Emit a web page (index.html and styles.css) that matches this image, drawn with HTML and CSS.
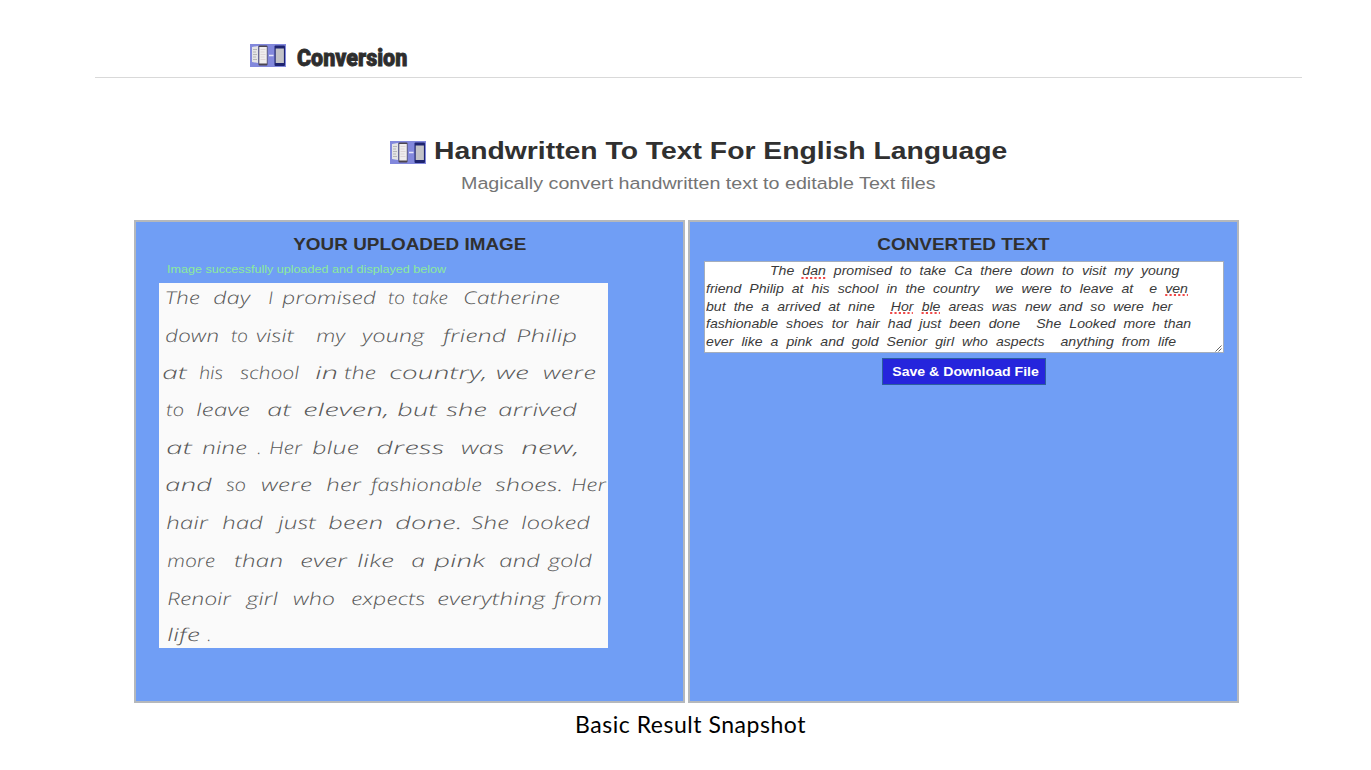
FILE: index.html
```html
<!DOCTYPE html>
<html lang="en">
<head>
<meta charset="utf-8">
<title>Conversion</title>
<link rel="stylesheet" href="styles.css">
</head>
<body>
<svg class="defs" width="0" height="0" aria-hidden="true">
  <symbol id="logo" viewBox="0 0 36 23">
    <rect width="36" height="23" fill="#8288dc"/>
    <path d="M2 3l6-1v17l-6-1z" fill="#e4e4e6"/>
    <path d="M3 5.500h4M3 8h3M3 10.500h4M3 13h3M3 15.500h4" stroke="#aaa" stroke-width=".8"/>
    <rect x="8.500" y="1.500" width="9" height="20" rx="1" fill="#4b4550"/>
    <rect x="9.300" y="3" width="7.500" height="16.500" fill="#f0eeee"/>
    <path d="M10.500 5.500h5M10.500 8h4M10.500 10.500h5M10.500 13h4M10.500 15.500h5" stroke="#d5cccd" stroke-width=".7"/>
    <path d="M19 11.500h4.500" stroke="#e6e6fa" stroke-width="1.500"/>
    <rect x="24.500" y="1.500" width="10.500" height="20.500" rx="1" fill="#1e2470"/>
    <rect x="25.700" y="4.500" width="8.200" height="14.500" fill="#c3c3c7"/>
  </symbol>
</svg>
<header class="topbar">
  <svg class="logo"><use href="#logo"/></svg>
  <span class="brand">Conversion</span>
</header>
<section class="hero">
  <div class="hero-row">
    <svg class="logo hero-logo"><use href="#logo"/></svg>
    <h1 class="title">Handwritten To Text For English Language</h1>
  </div>
  <p class="subtitle">Magically convert handwritten text to editable Text files</p>
</section>
<main class="panels">
  <section class="panel">
    <h2 class="panel-title">YOUR UPLOADED IMAGE</h2>
    <p class="success">Image successfully uploaded and displayed below</p>
    <svg class="paper" viewBox="158.500 283.500 449 364.500">
      <g transform="translate(0 304) skewX(5)"><text x="165" textLength="35" lengthAdjust="spacingAndGlyphs">The</text><text x="213" textLength="37" lengthAdjust="spacingAndGlyphs">day</text><text x="268" textLength="5" lengthAdjust="spacingAndGlyphs">I</text><text x="282" textLength="94" lengthAdjust="spacingAndGlyphs">promised</text><text x="388" textLength="17" lengthAdjust="spacingAndGlyphs">to</text><text x="412" textLength="36" lengthAdjust="spacingAndGlyphs">take</text><text x="463" textLength="97" lengthAdjust="spacingAndGlyphs">Catherine</text></g>
      <g transform="translate(0 342) skewX(5)"><text x="165" textLength="54" lengthAdjust="spacingAndGlyphs">down</text><text x="231" textLength="17" lengthAdjust="spacingAndGlyphs">to</text><text x="256" textLength="38" lengthAdjust="spacingAndGlyphs">visit</text><text x="316" textLength="29" lengthAdjust="spacingAndGlyphs">my</text><text x="362" textLength="62" lengthAdjust="spacingAndGlyphs">young</text><text x="443" textLength="63" lengthAdjust="spacingAndGlyphs">friend</text><text x="516" textLength="61" lengthAdjust="spacingAndGlyphs">Philip</text></g>
      <g transform="translate(0 379.500) skewX(5)"><text x="162" textLength="25" lengthAdjust="spacingAndGlyphs">at</text><text x="199" textLength="24" lengthAdjust="spacingAndGlyphs">his</text><text x="240" textLength="59" lengthAdjust="spacingAndGlyphs">school</text><text x="315" textLength="23" lengthAdjust="spacingAndGlyphs">in</text><text x="344" textLength="32" lengthAdjust="spacingAndGlyphs">the</text><text x="389" textLength="98" lengthAdjust="spacingAndGlyphs">country,</text><text x="496" textLength="33" lengthAdjust="spacingAndGlyphs">we</text><text x="543" textLength="53" lengthAdjust="spacingAndGlyphs">were</text></g>
      <g transform="translate(0 416) skewX(5)"><text x="166" textLength="18" lengthAdjust="spacingAndGlyphs">to</text><text x="196" textLength="54" lengthAdjust="spacingAndGlyphs">leave</text><text x="267" textLength="24" lengthAdjust="spacingAndGlyphs">at</text><text x="303" textLength="86" lengthAdjust="spacingAndGlyphs">eleven,</text><text x="397" textLength="40" lengthAdjust="spacingAndGlyphs">but</text><text x="446" textLength="41" lengthAdjust="spacingAndGlyphs">she</text><text x="498" textLength="79" lengthAdjust="spacingAndGlyphs">arrived</text></g>
      <g transform="translate(0 454) skewX(5)"><text x="166" textLength="26" lengthAdjust="spacingAndGlyphs">at</text><text x="202" textLength="45" lengthAdjust="spacingAndGlyphs">nine</text><text x="257">.</text><text x="269" textLength="33" lengthAdjust="spacingAndGlyphs">Her</text><text x="312" textLength="47" lengthAdjust="spacingAndGlyphs">blue</text><text x="376" textLength="68" lengthAdjust="spacingAndGlyphs">dress</text><text x="461" textLength="43" lengthAdjust="spacingAndGlyphs">was</text><text x="521" textLength="58" lengthAdjust="spacingAndGlyphs">new,</text></g>
      <g transform="translate(0 491.500) skewX(5)"><text x="165" textLength="47" lengthAdjust="spacingAndGlyphs">and</text><text x="226" textLength="20" lengthAdjust="spacingAndGlyphs">so</text><text x="261" textLength="51" lengthAdjust="spacingAndGlyphs">were</text><text x="326" textLength="35" lengthAdjust="spacingAndGlyphs">her</text><text x="371" textLength="111" lengthAdjust="spacingAndGlyphs">fashionable</text><text x="495" textLength="68" lengthAdjust="spacingAndGlyphs">shoes.</text><text x="571" textLength="35" lengthAdjust="spacingAndGlyphs">Her</text></g>
      <g transform="translate(0 529) skewX(5)"><text x="166" textLength="42" lengthAdjust="spacingAndGlyphs">hair</text><text x="222" textLength="41" lengthAdjust="spacingAndGlyphs">had</text><text x="278" textLength="38" lengthAdjust="spacingAndGlyphs">just</text><text x="328" textLength="55" lengthAdjust="spacingAndGlyphs">been</text><text x="395" textLength="67" lengthAdjust="spacingAndGlyphs">done.</text><text x="471" textLength="38" lengthAdjust="spacingAndGlyphs">She</text><text x="521" textLength="69" lengthAdjust="spacingAndGlyphs">looked</text></g>
      <g transform="translate(0 567) skewX(5)"><text x="167" textLength="48" lengthAdjust="spacingAndGlyphs">more</text><text x="234" textLength="49" lengthAdjust="spacingAndGlyphs">than</text><text x="300" textLength="47" lengthAdjust="spacingAndGlyphs">ever</text><text x="357" textLength="37" lengthAdjust="spacingAndGlyphs">like</text><text x="411" textLength="14" lengthAdjust="spacingAndGlyphs">a</text><text x="434" textLength="51" lengthAdjust="spacingAndGlyphs">pink</text><text x="499" textLength="41" lengthAdjust="spacingAndGlyphs">and</text><text x="548" textLength="44" lengthAdjust="spacingAndGlyphs">gold</text></g>
      <g transform="translate(0 605) skewX(5)"><text x="167" textLength="64" lengthAdjust="spacingAndGlyphs">Renoir</text><text x="246" textLength="32" lengthAdjust="spacingAndGlyphs">girl</text><text x="293" textLength="42" lengthAdjust="spacingAndGlyphs">who</text><text x="351" textLength="74" lengthAdjust="spacingAndGlyphs">expects</text><text x="437" textLength="108" lengthAdjust="spacingAndGlyphs">everything</text><text x="554" textLength="48" lengthAdjust="spacingAndGlyphs">from</text></g>
      <g transform="translate(0 641.500) skewX(5)"><text x="167" textLength="33" lengthAdjust="spacingAndGlyphs">life</text><text x="207">.</text></g>
    </svg>
  </section>
  <section class="panel">
    <h2 class="panel-title">CONVERTED TEXT</h2>
    <div class="output">
      <div class="line l1">The <u>dan</u> promised to take Ca there down to visit my young</div>
      <div class="line l2">friend Philip at his school in the country &nbsp;we were to leave at &nbsp;e <u>ven</u></div>
      <div class="line l3">but the a arrived at nine &nbsp;<u>Hor</u> <u>ble</u> areas was new and so were her</div>
      <div class="line l4">fashionable shoes tor hair had just been done &nbsp;She Looked more than</div>
      <div class="line l5">ever like a pink and gold Senior girl who aspects &nbsp;anything from life</div>
      <svg class="grip" viewBox="0 0 7 7"><path d="M.5 6.500l6-6M3.500 6.500l3-3" stroke="#555" stroke-width=".9"/></svg>
    </div>
    <button class="save"><span>Save &amp; Download File</span></button>
  </section>
</main>
<footer class="caption">Basic Result Snapshot</footer>
</body>
</html>
```
FILE: styles.css
```css
* { box-sizing: border-box; }
body {
  margin: 0;
  height: 770px;
  overflow: hidden;
  background: #fff;
  color: #303030;
  font-family: "Liberation Sans", Arial, sans-serif;
}
h1, h2, p { margin: 0; white-space: nowrap; }
.defs { display: block; height: 0; }
.topbar {
  display: flex;
  align-items: flex-start;
  height: 78px;
  margin: 0 69px 0 95px;
  padding: 44px 0 0 155px;
  border-bottom: 1px solid #d9d9d9;
}
.logo { width: 36px; height: 23px; flex: none; }
.brand {
  margin: 1px 0 0 11px;
  font: 900 23px/27px Roboto, sans-serif;
  color: #2d2d2d;
  transform: scaleX(.935);
  transform-origin: 0 0;
  -webkit-text-stroke: .8px #2d2d2d;
}
.hero { height: 142px; padding-top: 59px; }
.hero-row { display: flex; padding-left: 390px; }
.hero-logo { margin-top: 4px; }
.title {
  margin-left: 7.500px;
  font-size: 24px;
  line-height: 28px;
  transform: scaleX(1.18);
  transform-origin: 0 0;
}
.subtitle {
  width: max-content;
  margin: 9px 0 0 461px;
  font-size: 16.700px;
  line-height: 20px;
  color: #747474;
  transform: scaleX(1.18);
  transform-origin: 0 0;
}
.panels {
  display: grid;
  grid-template-columns: 551px 551px;
  gap: 3px;
  height: 483px;
  margin-left: 134px;
}
.panel {
  border: 2px solid #b5b8bc;
  background: #709ef5;
  padding-top: 13px;
}
.panel-title {
  width: max-content;
  margin: 0 auto;
  font-size: 17px;
  line-height: 20px;
  transform: scaleX(1.112);
}
.success {
  width: max-content;
  margin: 7px 0 0 31px;
  font-size: 11.200px;
  line-height: 14px;
  color: #8cea9c;
  transform: scaleX(1.125);
  transform-origin: 0 0;
}
.paper {
  display: block;
  width: 449px;
  height: 364.500px;
  margin: 7px 0 0 22.500px;
  background: #fafafa;
}
.paper text {
  font: italic 300 17.500px "Open Sans", "Noto Sans", sans-serif;
  fill: #585858;
}
.output {
  position: relative;
  width: 520px;
  height: 92px;
  margin: 6px 0 0 14px;
  padding: 0 0 0 1px;
  border: 1px solid #a5aebc;
  background: #fff;
  color: #3a3a3a;
  font-size: 13px;
  font-style: italic;
  line-height: 17.750px;
}
.line {
  height: 17.750px;
  white-space: nowrap;
  text-align-last: justify;
  transform: scaleX(1.083);
  transform-origin: 0 0;
}
.line u { text-decoration: underline dotted #f04848 1.500px; text-underline-offset: 1.500px; text-decoration-skip-ink: none; }
.l1 { margin-left: 63.500px; width: 378px; }
.l2 { width: 445px; }
.l3 { width: 430.500px; }
.l4 { width: 448px; }
.l5 { width: 434px; }
.grip { position: absolute; right: 1px; bottom: 0; width: 7px; height: 7px; }
.save {
  display: block;
  width: 164px;
  height: 27px;
  margin: 5px 0 0 192px;
  padding: 0;
  border: 1px solid #2c5f9e;
  background: #2525dc;
  color: #fff;
  font: bold 13px/23px "Liberation Sans", Arial, sans-serif;
  white-space: nowrap;
}
.save span { display: inline-block; margin: 0 0 1px 3px; transform: scaleX(1.085); }
.caption {
  padding: 7px 0 0 575px;
  font: 23px/28px Lato, sans-serif;
  letter-spacing: .53px;
  color: #000;
  white-space: nowrap;
}
```
